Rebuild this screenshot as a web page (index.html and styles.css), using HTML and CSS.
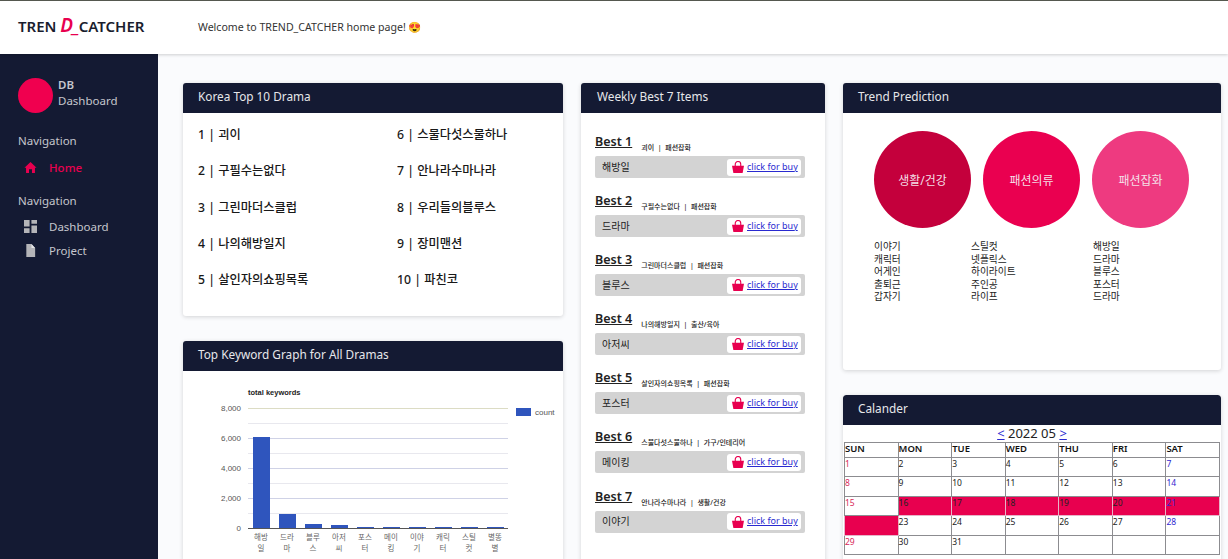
FILE: index.html
```html
<!DOCTYPE html>
<html lang="ko">
<head>
	<meta charset="utf-8"/>
	<title>TREND_CATCHER</title>
	<link rel="stylesheet" href="styles.css">
</head>

<body>
	<header class="topbar">
		<div class="logo">TREN <em>D_</em>CATCHER</div>
		<div class="welcome">Welcome to TREND_CATCHER home page! <span class="emoji">😍</span></div>
	</header>

	<div class="layout">
		<aside class="sidebar">
			<div class="profile">
				<div class="avatar"></div>
				<div class="profile-text">
					<b>DB</b>
					<span>Dashboard</span>
				</div>
			</div>
			<div class="nav-title">Navigation</div>
			<a class="nav-item active">
				<svg class="nav-icon" viewBox="0 0 14 14"><path d="M7 1 L13.5 7.2 L11.8 7.2 L11.8 13 L8.6 13 L8.6 9 L5.4 9 L5.4 13 L2.2 13 L2.2 7.2 L.5 7.2 Z" fill="#e8004f"/></svg>
				Home
			</a>
			<div class="nav-title second">Navigation</div>
			<a class="nav-item">
				<svg class="nav-icon" viewBox="0 0 14 14"><path d="M0 0h6v7H0zM8 0h6v4H8zM8 6h6v8H8zM0 9h6v5H0z" fill="#b4b4b8"/></svg>
				Dashboard
			</a>
			<a class="nav-item">
				<svg class="nav-icon" viewBox="0 0 14 14"><path d="M2.5 0H8L12 4.2V14H2.5Z" fill="#b4b4b8"/><path d="M8 0V4.2H12Z" fill="#e4e4e6"/></svg>
				Project
			</a>
		</aside>

		<main class="content">
			<div class="col col-left">
				<section class="card card-drama">
					<h3>Korea Top 10 Drama</h3>
					<ul class="drama-list">
						<li>1 | 괴이</li>
						<li>6 | 스물다섯스물하나</li>
						<li>2 | 구필수는없다</li>
						<li>7 | 안나라수마나라</li>
						<li>3 | 그린마더스클럽</li>
						<li>8 | 우리들의블루스</li>
						<li>4 | 나의해방일지</li>
						<li>9 | 장미맨션</li>
						<li>5 | 살인자의쇼핑목록</li>
						<li>10 | 파친코</li>
					</ul>
				</section>
				<section class="card card-graph">
					<h3>Top Keyword Graph for All Dramas</h3>
					<svg class="chart" width="380" height="190" viewBox="183 371 380 190">
						<text x="248" y="395" class="chart-title">total keywords</text>
						<path d="M248 423.5H508M248 453.5H508M248 483.5H508M248 513.5H508" stroke="#e8e8ee" fill="none"/>
						<path d="M248 408.5H508" stroke="#dcdcc4" fill="none"/>
						<path d="M248 438.5H508M248 468.5H508M248 498.5H508" stroke="#cfd2e6" fill="none"/>
						<g fill="#2f55bd">
							<rect x="253" y="437" width="17" height="91"/>
							<rect x="279" y="514" width="17" height="14"/>
							<rect x="305" y="524" width="17" height="4"/>
							<rect x="331" y="525" width="17" height="3"/>
							<rect x="357" y="527" width="17" height="1"/>
							<rect x="383" y="527" width="17" height="1"/>
							<rect x="409" y="527" width="17" height="1"/>
							<rect x="435" y="527" width="17" height="1"/>
							<rect x="461" y="527" width="17" height="1"/>
							<rect x="487" y="527" width="17" height="1"/>
						</g>
						<path d="M248 528.5H508" stroke="#555" fill="none"/>
						<g class="chart-axis" text-anchor="end">
							<text x="241" y="411">8,000</text>
							<text x="241" y="441">6,000</text>
							<text x="241" y="471">4,000</text>
							<text x="241" y="501">2,000</text>
							<text x="241" y="531">0</text>
						</g>
						<g class="chart-label" text-anchor="middle">
							<text x="261" y="540">해방</text><text x="261" y="551">일</text>
							<text x="287" y="540">드라</text><text x="287" y="551">마</text>
							<text x="313" y="540">블루</text><text x="313" y="551">스</text>
							<text x="339" y="540">아저</text><text x="339" y="551">씨</text>
							<text x="365" y="540">포스</text><text x="365" y="551">터</text>
							<text x="391" y="540">메이</text><text x="391" y="551">킹</text>
							<text x="417" y="540">이야</text><text x="417" y="551">기</text>
							<text x="443" y="540">캐릭</text><text x="443" y="551">터</text>
							<text x="469" y="540">스틸</text><text x="469" y="551">컷</text>
							<text x="495" y="540">별똥</text><text x="495" y="551">별</text>
						</g>
						<rect x="516" y="408" width="15" height="8" fill="#2f55bd"/>
						<text x="535" y="415" class="chart-axis">count</text>
					</svg>
				</section>
			</div>

			<div class="col col-mid">
				<section class="card card-best">
					<h3>Weekly Best 7 Items</h3>
					<div class="best">
						<div class="best-head"><a>Best 1</a><span>괴이 &nbsp;|&nbsp; 패션잡화</span></div>
						<div class="best-bar">해방일
							<div class="buy"><svg viewBox="0 0 14 14"><path d="M0 5.5H14L12.4 14H1.6Z" fill="#e8004f"/><path d="M3.8 6V3.8a3.2 3.2 0 0 1 6.4 0V6" fill="none" stroke="#e8004f" stroke-width="1.3"/></svg><a>click for buy</a></div>
						</div>
					</div>
					<div class="best">
						<div class="best-head"><a>Best 2</a><span>구필수는없다 &nbsp;|&nbsp; 패션잡화</span></div>
						<div class="best-bar">드라마
							<div class="buy"><svg viewBox="0 0 14 14"><path d="M0 5.5H14L12.4 14H1.6Z" fill="#e8004f"/><path d="M3.8 6V3.8a3.2 3.2 0 0 1 6.4 0V6" fill="none" stroke="#e8004f" stroke-width="1.3"/></svg><a>click for buy</a></div>
						</div>
					</div>
					<div class="best">
						<div class="best-head"><a>Best 3</a><span>그린마더스클럽 &nbsp;|&nbsp; 패션잡화</span></div>
						<div class="best-bar">블루스
							<div class="buy"><svg viewBox="0 0 14 14"><path d="M0 5.5H14L12.4 14H1.6Z" fill="#e8004f"/><path d="M3.8 6V3.8a3.2 3.2 0 0 1 6.4 0V6" fill="none" stroke="#e8004f" stroke-width="1.3"/></svg><a>click for buy</a></div>
						</div>
					</div>
					<div class="best">
						<div class="best-head"><a>Best 4</a><span>나의해방일지 &nbsp;|&nbsp; 출산/육아</span></div>
						<div class="best-bar">아저씨
							<div class="buy"><svg viewBox="0 0 14 14"><path d="M0 5.5H14L12.4 14H1.6Z" fill="#e8004f"/><path d="M3.8 6V3.8a3.2 3.2 0 0 1 6.4 0V6" fill="none" stroke="#e8004f" stroke-width="1.3"/></svg><a>click for buy</a></div>
						</div>
					</div>
					<div class="best">
						<div class="best-head"><a>Best 5</a><span>살인자의쇼핑목록 &nbsp;|&nbsp; 패션잡화</span></div>
						<div class="best-bar">포스터
							<div class="buy"><svg viewBox="0 0 14 14"><path d="M0 5.5H14L12.4 14H1.6Z" fill="#e8004f"/><path d="M3.8 6V3.8a3.2 3.2 0 0 1 6.4 0V6" fill="none" stroke="#e8004f" stroke-width="1.3"/></svg><a>click for buy</a></div>
						</div>
					</div>
					<div class="best">
						<div class="best-head"><a>Best 6</a><span>스물다섯스물하나 &nbsp;|&nbsp; 가구/인테리어</span></div>
						<div class="best-bar">메이킹
							<div class="buy"><svg viewBox="0 0 14 14"><path d="M0 5.5H14L12.4 14H1.6Z" fill="#e8004f"/><path d="M3.8 6V3.8a3.2 3.2 0 0 1 6.4 0V6" fill="none" stroke="#e8004f" stroke-width="1.3"/></svg><a>click for buy</a></div>
						</div>
					</div>
					<div class="best">
						<div class="best-head"><a>Best 7</a><span>안나라수마나라 &nbsp;|&nbsp; 생활/건강</span></div>
						<div class="best-bar">이야기
							<div class="buy"><svg viewBox="0 0 14 14"><path d="M0 5.5H14L12.4 14H1.6Z" fill="#e8004f"/><path d="M3.8 6V3.8a3.2 3.2 0 0 1 6.4 0V6" fill="none" stroke="#e8004f" stroke-width="1.3"/></svg><a>click for buy</a></div>
						</div>
					</div>
				</section>
			</div>

			<div class="col col-right">
				<section class="card card-trend">
					<h3>Trend Prediction</h3>
					<div class="circles">
						<div class="circle c1">생활/건강</div>
						<div class="circle c2">패션의류</div>
						<div class="circle c3">패션잡화</div>
					</div>
					<div class="trend-lists">
						<ul><li>이야기</li><li>캐릭터</li><li>어게인</li><li>출퇴근</li><li>갑자기</li></ul>
						<ul><li>스틸컷</li><li>넷플릭스</li><li>하이라이트</li><li>주인공</li><li>라이프</li></ul>
						<ul><li>해방일</li><li>드라마</li><li>블루스</li><li>포스터</li><li>드라마</li></ul>
					</div>
				</section>
				<section class="card card-cal">
					<h3>Calander</h3>
					<div class="cal-month"><a>&lt;</a> 2022 05 <a>&gt;</a></div>
					<table class="cal">
						<tr class="cal-head"><th>SUN</th><th>MON</th><th>TUE</th><th>WED</th><th>THU</th><th>FRI</th><th>SAT</th></tr>
						<tr><td class="sun">1</td><td>2</td><td>3</td><td>4</td><td>5</td><td>6</td><td class="sat">7</td></tr>
						<tr><td class="sun">8</td><td>9</td><td>10</td><td>11</td><td>12</td><td>13</td><td class="sat">14</td></tr>
						<tr><td class="sun">15</td><td class="mark">16</td><td class="mark">17</td><td class="mark">18</td><td class="mark">19</td><td class="mark">20</td><td class="sat mark">21</td></tr>
						<tr><td class="mark blank"></td><td>23</td><td>24</td><td>25</td><td>26</td><td>27</td><td class="sat">28</td></tr>
						<tr><td class="sun">29</td><td>30</td><td>31</td><td></td><td></td><td></td><td></td></tr>
					</table>
				</section>
			</div>
		</main>
	</div>
</body>
</html>
```

FILE: styles.css
```css
* {
	box-sizing: border-box;
}
html, body {
	height: 559px;
	overflow: hidden;
}
body {
	margin: 0;
	font-family: "Noto Sans", "Noto Sans CJK KR", sans-serif;
	font-size: 12px;
	color: #222;
	background: #fafbfd;
}
ul {
	list-style: none;
	margin: 0;
	padding: 0;
}

/* top bar */
.topbar {
	height: 54px;
	display: flex;
	align-items: center;
	background: #fff;
	border-top: 1px solid #55584f;
	box-shadow: 0 1px 3px rgba(0,0,0,.18);
	position: relative;
}
.logo {
	width: 198px;
	padding-left: 18px;
	font-size: 15px;
	line-height: 20px;
	margin-top: -5px;
	font-weight: 600;
	color: #1a1d2e;
	white-space: nowrap;
}
.logo em {
	color: #e8004f;
	font-size: 19px;
	line-height: 20px;
	font-weight: 600;
	letter-spacing: -1px;
}
.welcome {
	margin-top: -2px;
	font-size: 10.6px;
	color: #333;
}
.emoji {
	font-family: "Noto Color Emoji", "DejaVu Sans", sans-serif;
}

/* side bar */
.layout {
	display: flex;
	height: 505px;
	overflow: hidden;
}
.sidebar {
	width: 158px;
	flex: none;
	padding: 24px 18px 0;
	background: #141a33;
	color: #c5c6cd;
	font-size: 11.5px;
}
.profile {
	display: flex;
	align-items: flex-start;
	gap: 5px;
}
.avatar {
	width: 35px;
	height: 35px;
	border-radius: 50%;
	background: #f0004f;
}
.profile-text {
	margin-top: -1px;
	line-height: 16px;
}
.profile-text b {
	display: block;
	font-weight: 600;
}
.nav-title {
	margin: 19px 0 5px;
	line-height: 18px;
}
.nav-title.second {
	margin: 13px 0 4px;
}
.nav-item {
	display: flex;
	align-items: center;
	gap: 12px;
	height: 24px;
	padding-left: 6px;
}
.nav-item.active {
	color: #e8004f;
	font-weight: 500;
}
.nav-icon {
	width: 13px;
	height: 13px;
}

/* cards */
.content {
	flex: 1;
	display: grid;
	grid-template-columns: 380px 244px 378px;
	gap: 18px;
	padding: 29px 0 0 25px;
	align-items: start;
}
.card {
	background: #fff;
	box-shadow: 0 1px 4px rgba(0,0,0,.16);
	border-radius: 3px;
	margin-bottom: 25px;
}
.card h3 {
	margin: 0;
	height: 30px;
	padding-left: 15px;
	background: #141a33;
	color: #e6e7ea;
	border-radius: 3px 3px 0 0;
	font-size: 11.8px;
	font-weight: 400;
	line-height: 27px;
}

.drama-list {
	display: grid;
	grid-template-columns: 199px 1fr;
	grid-auto-rows: 36.3px;
	height: 203px;
	padding: 13px 15px 0;
	font-size: 12.25px;
	font-weight: 500;
	line-height: 18px;
	color: #181818;
}

.chart {
	display: block;
}
.chart-title {
	font: bold 7.5px "Liberation Sans", sans-serif;
	fill: #222;
}
.chart-axis {
	font: 8px "Liberation Sans", sans-serif;
	fill: #555;
}
.chart-label {
	font: 7.5px "Noto Sans CJK KR", sans-serif;
	fill: #666;
}

/* weekly best */
.card-best {
	height: 480px;
}
.card-best h3 {
	margin-bottom: 18px;
	padding-left: 16px;
}
.best {
	margin: 0 20px 0 14px;
	height: 59.1px;
}
.best-head {
	display: flex;
	align-items: flex-end;
	height: 25px;
}
.best-head a {
	font-size: 12.5px;
	font-weight: 600;
	line-height: 18px;
	text-decoration: underline;
	margin: 0 9px 5px 0;
}
.best-head span {
	font-size: 7px;
	font-weight: 500;
	line-height: 10px;
	margin-bottom: 3px;
}
.best-bar {
	display: flex;
	align-items: center;
	justify-content: space-between;
	height: 22px;
	padding: 0 4px 2px 7px;
	background: #d3d3d3;
	border-radius: 2px;
	font-size: 10px;
}
.buy {
	display: flex;
	align-items: center;
	gap: 3px;
	width: 74px;
	height: 17px;
	margin-top: 2px;
	padding-left: 5px;
	background: #fff;
	border-radius: 3px;
}
.buy svg {
	width: 12px;
	height: 12px;
}
.buy a {
	color: #2a2ad0;
	text-decoration: underline;
	font-size: 9px;
	line-height: 13px;
	margin-bottom: 2px;
}

/* trend */
.card-trend {
	height: 287px;
}
.circles {
	display: flex;
	gap: 12px;
	padding: 18px 0 0 31px;
}
.circle {
	width: 97px;
	height: 97px;
	border-radius: 50%;
	display: flex;
	align-items: center;
	justify-content: center;
	color: #f4dfe6;
	font-size: 12px;
}
.c1 {
	background: #c4003c;
}
.c2 {
	background: #ea0050;
}
.c3 {
	background: #ee3a80;
}
.trend-lists {
	display: grid;
	grid-template-columns: 97px 122px 1fr;
	padding: 13px 0 0 31px;
	font-size: 9.7px;
	line-height: 12.6px;
}

/* calendar */
.card-cal {
	height: 170px;
	overflow: hidden;
}
.cal-month {
	text-align: center;
	font-size: 13px;
	line-height: 17px;
}
.cal-month a {
	color: #2a2ad0;
	text-decoration: underline;
}
.cal {
	width: 376px;
	margin-left: 1px;
	border-collapse: collapse;
	table-layout: fixed;
	font-size: 8.5px;
}
.cal th, .cal td {
	border: 1px solid #8c8c90;
	padding: 0;
	text-align: left;
	vertical-align: top;
	height: 19.5px;
	line-height: 12px;
}
.cal-head th {
	height: 14.5px;
	font-size: 9.5px;
	font-weight: 600;
	color: #111;
}
.sun {
	color: #d8285a;
}
.sat {
	color: #3228d0;
}
.cal td.mark {
	background: #e8004f;
	border-color: #e6b4c8;
}
```
